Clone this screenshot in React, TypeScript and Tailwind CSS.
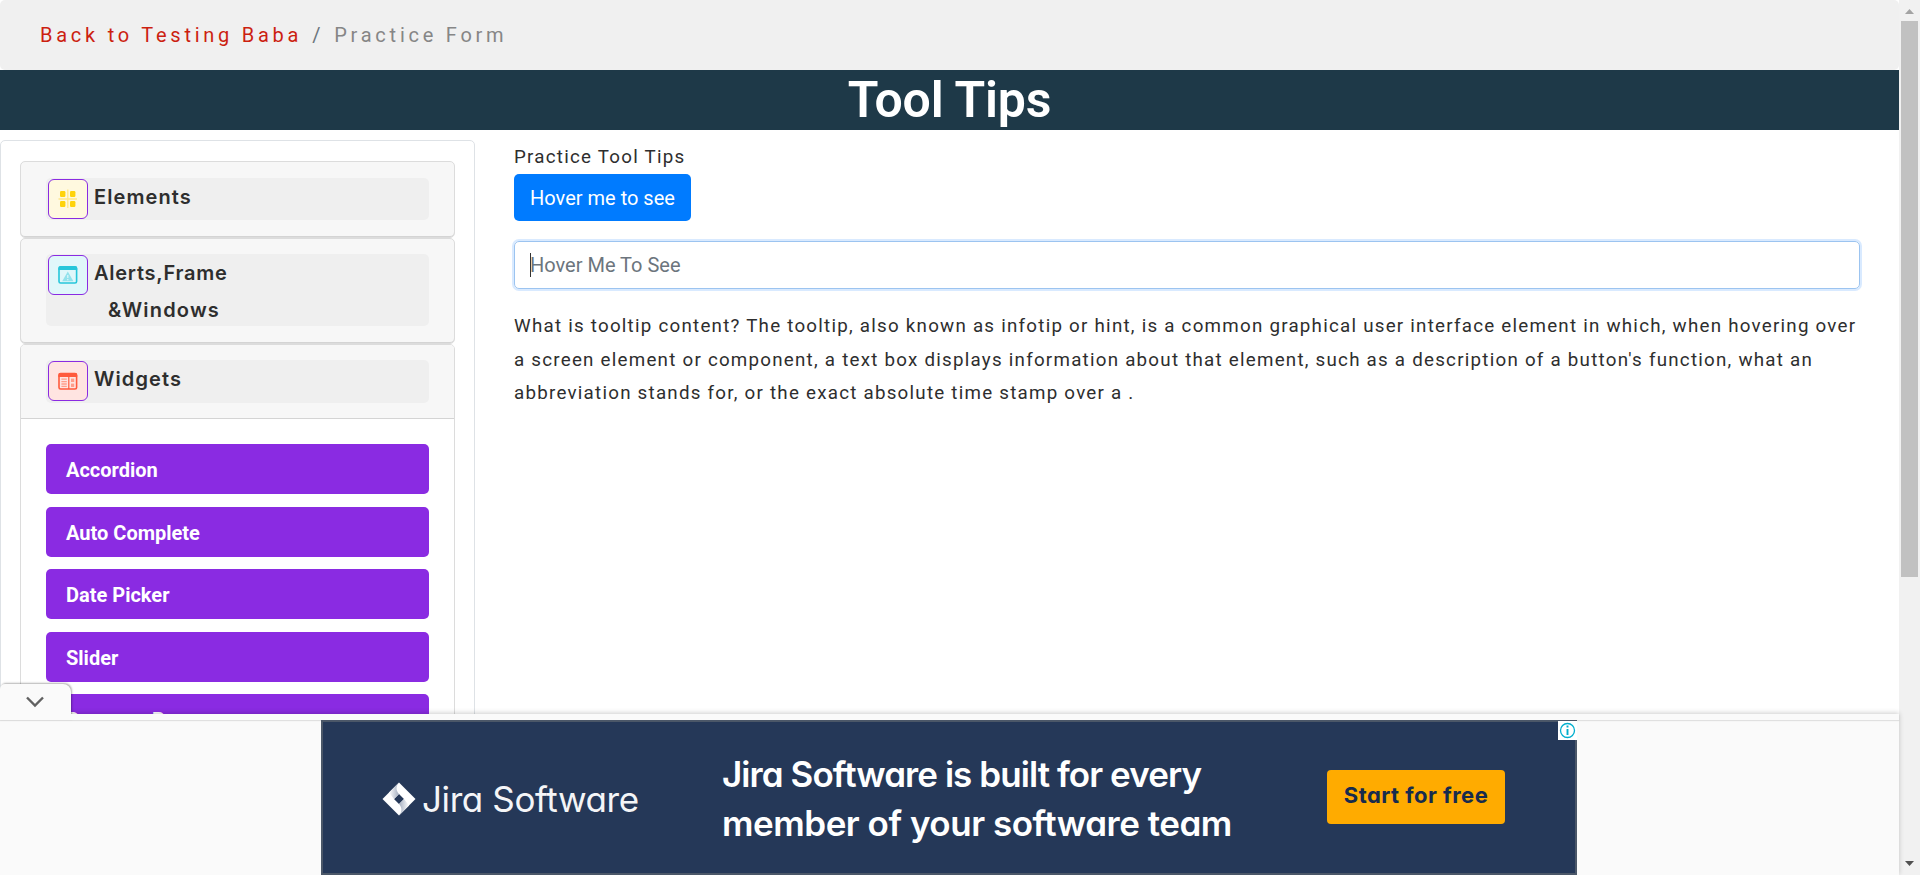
import React from "react";

const INK = "text-[#2e2e2e]";

function ElementsIcon() {
  return (
    <svg width="20" height="20" viewBox="0 0 20 20" className="block">
      <g fill="#ffd30a">
        <rect x="2" y="2" width="5.4" height="6" rx="1.2" />
        <rect x="12" y="2" width="5.4" height="6" rx="1.2" />
        <rect x="2" y="12" width="5.4" height="6" rx="1.2" />
        <rect x="12" y="12" width="5.4" height="6" rx="1.2" />
      </g>
      <path d="M9.8 0.5v18.5M0.5 10h18.5" stroke="#ffe88a" strokeWidth="1.3" />
    </svg>
  );
}

function AlertsIcon() {
  return (
    <svg width="20" height="20" viewBox="0 0 20 20" className="block">
      <rect x="1" y="2" width="17.6" height="16" rx="1.6" fill="none" stroke="#26c6da" strokeWidth="1.6" />
      <path d="M0.4 3a2 2 0 0 1 2-2h14.8a2 2 0 0 1 2 2v2H0.4z" fill="#26c6da" />
      <path d="M9.8 6.6l5.6 9.6H4.2z" fill="#93e2ec" />
      <path d="M9.8 10v3M9.8 14v1.2" stroke="#e0f7fa" strokeWidth="1.2" />
    </svg>
  );
}

function WidgetsIcon() {
  return (
    <svg width="20" height="20" viewBox="0 0 20 20" className="block">
      <rect x="1" y="2.6" width="17.6" height="15.4" rx="1.6" fill="none" stroke="#ff5a3d" strokeWidth="1.6" />
      <path d="M0.4 4a2 2 0 0 1 2-2h14.8a2 2 0 0 1 2 2v2H0.4z" fill="#ff5a3d" />
      <path d="M10.8 6v12" stroke="#ff5a3d" strokeWidth="1.2" />
      <path d="M3.4 8.2h5.4M3.4 10.6h5.4M3.4 13h5.4M3.4 15.4h5.4" stroke="#ff9d8a" strokeWidth="1.3" />
      <rect x="13" y="7.6" width="3.2" height="3.4" fill="#ff9d8a" />
      <rect x="13" y="12.6" width="3.2" height="3.4" fill="#ff9d8a" />
    </svg>
  );
}

function IconBox({ tint, children }: { tint: string; children: React.ReactNode }) {
  return (
    <span className={`flex size-10 shrink-0 items-center justify-center rounded-md border border-[#8a2be2] ${tint}`}>
      {children}
    </span>
  );
}

const links = ["Accordion", "Auto Complete", "Date Picker", "Slider", "Progress Bar"];

function Sidebar() {
  return (
    <aside className="h-[700px] w-[475px] shrink-0 rounded-[5px] border border-[#dee2e6] px-[19px] pt-5">
      <div className="h-[77px] rounded-[5px] border border-[#dcdcdc] bg-[#f7f7f7] px-[25px] pt-4 shadow-[inset_0_-1px_0_#d4d4d4]">
        <div className="flex h-[42px] rounded-[5px] bg-[#efefef] pt-px pl-0.5">
          <IconBox tint="bg-[#fff9df]"><ElementsIcon /></IconBox>
          <span className={`pl-[6px] font-[Inter] text-[20px] leading-[37px] font-semibold tracking-[1.1px] ${INK}`}>Elements</span>
        </div>
      </div>
      <div className="h-[106px] rounded-[5px] border border-[#dcdcdc] bg-[#f7f7f7] px-[25px] pt-[15px] shadow-[inset_0_-1px_0_#d4d4d4]">
        <div className="flex h-[72px] rounded-[5px] bg-[#efefef] pt-px pl-0.5">
          <IconBox tint="bg-[#e0f7fa]"><AlertsIcon /></IconBox>
          <span className={`pl-[6px] font-[Inter] text-[20px] leading-[37px] font-semibold ${INK}`}>
            <span className="block tracking-[0.75px]">Alerts,Frame</span>
            <span className="block pl-[14px] tracking-[1.2px]">&amp;Windows</span>
          </span>
        </div>
      </div>
      <div className="h-[500px] rounded-t-[5px] border border-[#dcdcdc]">
        <div className="h-[74px] rounded-t-[4px] border-b border-[#d4d4d4] bg-[#f7f7f7] px-[25px] pt-[15px]">
          <div className="flex h-[43px] rounded-[5px] bg-[#efefef] pt-px pl-0.5">
            <IconBox tint="bg-[#ffe4e1]"><WidgetsIcon /></IconBox>
            <span className={`pl-[6px] font-[Inter] text-[20px] leading-[37px] font-semibold tracking-[1.1px] ${INK}`}>Widgets</span>
          </div>
        </div>
        <ul className="flex flex-col gap-[12.5px] px-[25px] pt-[25px]">
          {links.map((l) => (
            <li key={l} className="h-[50px] rounded-[5px] bg-[#8a2be2] pl-[20px] text-[20px] leading-[52px] font-bold text-white">
              {l}
            </li>
          ))}
        </ul>
      </div>
    </aside>
  );
}

function Scrollbar() {
  return (
    <div className="flex h-[875px] w-[21px] shrink-0 flex-col items-center justify-between bg-[#f1f1f1]">
      <div className="flex flex-col items-center">
        <svg width="21" height="21" viewBox="0 0 21 21"><path d="M10.5 9l4.5 5H6z" fill="#a3a3a3" /></svg>
        <div className="h-[556px] w-[17px] bg-[#c1c1c1]" />
      </div>
      <svg width="21" height="21" viewBox="0 0 21 21"><path d="M10.5 12l4.5-5H6z" fill="#505050" /></svg>
    </div>
  );
}

function JiraMark() {
  return (
    <svg width="34" height="34" viewBox="0 0 34 34" className="block">
      <defs>
        <linearGradient id="foldTop" x1="0" y1="0" x2="1" y2="0">
          <stop offset="0" stopColor="#fff" />
          <stop offset="1" stopColor="#a3adbf" />
        </linearGradient>
        <linearGradient id="foldBottom" x1="1" y1="0" x2="0" y2="0">
          <stop offset="0" stopColor="#fff" />
          <stop offset="1" stopColor="#a3adbf" />
        </linearGradient>
      </defs>
      <path fillRule="evenodd" d="M17 0.5L33.5 17 17 33.5 0.5 17zM17 12l-5 5 5 5 5-5z" fill="#fff" />
      <path d="M17 0.5c-3.500 4-3 8 0 11.500l-5 5-5-6.500z" fill="url(#foldTop)" />
      <path d="M17 33.500c3.500-4 3-8 0-11.500l5-5 5 6.500z" fill="url(#foldBottom)" />
    </svg>
  );
}

function Ad() {
  return (
    <div className="absolute bottom-0 left-0 h-[161px] w-[1899px] bg-[#fafafa] shadow-[0_-1px_5px_rgba(0,0,0,0.2)]">
      <div className="absolute -top-[30px] left-0 flex h-[36px] w-[71px] items-center justify-center rounded-tl-[5px] rounded-tr-[8px] bg-[#fafafa] pr-px shadow-[1px_-1px_2px_rgba(0,0,0,0.3)]">
        <svg width="20" height="14" viewBox="0 0 20 14"><path d="M2 2.500l8 8 8-8" fill="none" stroke="#616161" strokeWidth="2.400" /></svg>
      </div>
      <div className="relative h-[6px] w-full bg-[#fafafa] shadow-[0_1px_1px_rgba(0,0,0,0.1)]" />
      <div className="relative ml-[321px] flex h-[155px] w-[1256px] items-center border-2 border-[#4b5768] bg-[#253858] pt-[2px] font-[Inter] [font-feature-settings:'cv11']">
        <div className="flex w-[399px] items-center pl-[59px]">
          <JiraMark />
          <span className="ml-[6px] text-[35px] leading-[40px] tracking-[-0.4px] whitespace-nowrap text-[#f4f5f7]">Jira Software</span>
        </div>
        <div className="w-[605px] text-[35px] leading-[49px] font-semibold whitespace-nowrap text-white">
          <div className="tracking-[-0.930px]">Jira Software is built for every</div>
          <div className="tracking-[-0.480px]">member of your software team</div>
        </div>
        <div className="mb-[3px] flex h-[54px] w-[178px] items-center justify-center rounded-[4px] bg-[#ffab00] pb-[3px] text-[22px] font-bold tracking-[0.450px] whitespace-nowrap text-[#172b4d]">Start for free</div>
        <div className="absolute -top-px -right-0.5 flex h-[19px] w-[19px] items-center justify-center bg-white">
          <svg width="17" height="17" viewBox="0 0 17 17">
            <circle cx="8.500" cy="8.500" r="7" fill="none" stroke="#00aecd" strokeWidth="1.300" />
            <path d="M8.500 3.500v2M8.500 7v6" stroke="#00aecd" strokeWidth="1.900" />
          </svg>
        </div>
      </div>
    </div>
  );
}

export default function App() {
  return (
    <div className="relative flex h-[875px] w-[1920px] overflow-hidden bg-white font-[Roboto]">
      <div className="flex h-[875px] w-[1899px] flex-col overflow-hidden">
        <nav className="flex h-[70px] shrink-0 items-center rounded-[5px] bg-[#f0f0f0] pl-[40px] text-[20px] tracking-[3.750px] whitespace-pre text-[#868686]">
          <a className="text-[#cc1f10]">Back to Testing Baba</a>
          <span className="pl-[10px] text-[#6c757d]">/</span>
          <span className="pl-[10px]">Practice Form</span>
        </nav>
        <h1 className="h-[60px] shrink-0 bg-[#1e3948] text-center text-[50px] leading-[60px] font-semibold tracking-[-0.200px] text-white">Tool Tips</h1>
        <div className="flex pt-[10px]">
          <Sidebar />
          <main className="box-content w-[1346px] shrink-0 pl-[39px]">
            <div className={`text-[18.750px] leading-[34px] tracking-[1.250px] ${INK}`}>Practice Tool Tips</div>
            <button className="block h-[47px] w-[177px] rounded-[5px] bg-[#007bff] text-[20px] text-white">Hover me to see</button>
            <div className="mt-[20px] flex h-[48px] items-center rounded-[5px] border border-[#9cc4f0] pl-[15px] text-[20px] text-[#6c757d] shadow-[0_0_0_2px_#d9eaff]">
              <span className="-mr-px h-6 w-px bg-[#333]" />
              <span>Hover Me To See</span>
            </div>
            <p className={`mt-[21px] text-[18.750px] leading-[33.500px] tracking-[1.240px] whitespace-nowrap ${INK}`}>
              What is tooltip content? The tooltip, also known as infotip or hint, is a common graphical user interface element in which, when hovering over<br />
              a screen element or component, a text box displays information about that element, such as a description of a button's function, what an<br />
              abbreviation stands for, or the exact absolute time stamp over a .
            </p>
          </main>
        </div>
      </div>
      <Scrollbar />
      <Ad />
    </div>
  );
}
